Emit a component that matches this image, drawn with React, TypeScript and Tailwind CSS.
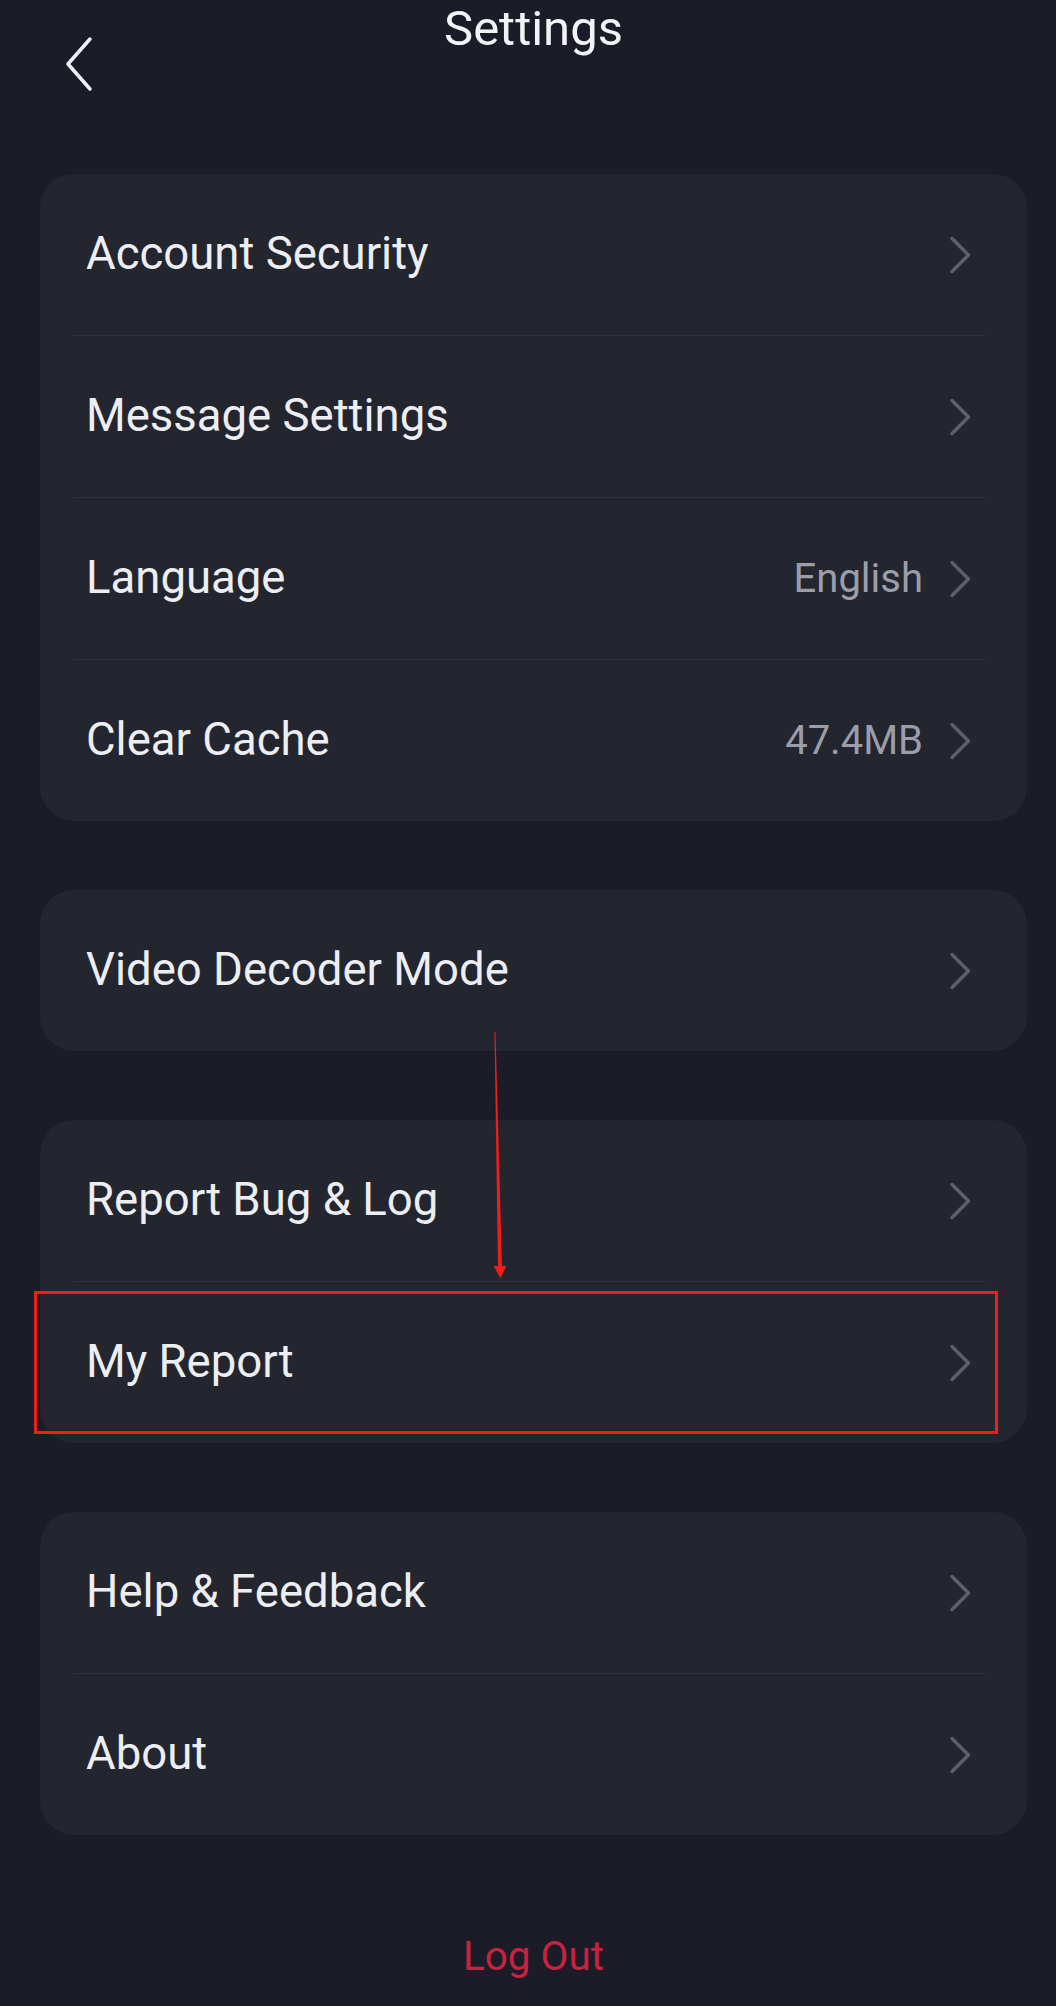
import React from 'react'

type Item = {
  label: string
  value?: string
  marked?: boolean
}

const groups: Item[][] = [
  [
    { label: 'Account Security' },
    { label: 'Message Settings' },
    { label: 'Language', value: 'English' },
    { label: 'Clear Cache', value: '47.4MB' },
  ],
  [{ label: 'Video Decoder Mode' }],
  [{ label: 'Report Bug & Log' }, { label: 'My Report', marked: true }],
  [{ label: 'Help & Feedback' }, { label: 'About' }],
]

function Chevron() {
  return (
    <svg width="22" height="38" viewBox="0 0 22 38" fill="none" className="shrink-0">
      <polyline points="3,2.5 19.5,19 3,35.5" stroke="#5d606c" strokeWidth={3.5} strokeLinecap="round" strokeLinejoin="round" />
    </svg>
  )
}

function Row({ item }: { item: Item }) {
  return (
    <div className="relative flex h-[161px] items-center pl-[46px] pr-[56px]">
      <span className="flex-1 text-[45.5px] text-[#eceef2]">{item.label}</span>
      {item.value && (
        <span className="mr-[26px] text-[40px] text-[#9b9ea8]">{item.value}</span>
      )}
      <Chevron />
      {/* annotation box */}
      {item.marked && (
        <div className="pointer-events-none absolute top-[9px] bottom-[9px] left-[-6px] right-[29px] border-[3px] border-[#f21d1a]" />
      )}
    </div>
  )
}

export default function App() {
  return (
    <div className="relative min-h-[2006px] w-[1056px] bg-[#1b1c27] pl-[40px] pr-[29px] font-['Roboto',sans-serif]">
      {/* Header */}
      <div className="grid h-[174px] grid-cols-[1fr_auto_1fr] items-start">
        <button className="ml-[22px] mt-[36px] w-[34px]" aria-label="Back">
          <svg width="34" height="56" viewBox="0 0 34 56" fill="none">
            <polyline points="28,3 6,28 28,53" stroke="#f2f3f6" strokeWidth={3.5} strokeLinecap="round" strokeLinejoin="round" />
          </svg>
        </button>
        <h1 className="pt-[1px] text-[49px] leading-[56px] font-normal text-[#f2f3f6]">Settings</h1>
        <div />
      </div>

      {/* Groups */}
      <div className="flex flex-col gap-[69px]">
        {groups.map((group, gi) => (
          <div key={gi} className="rounded-[34px] bg-[#23252f]">
            {group.map((item, i) => (
              <React.Fragment key={item.label}>
                {i > 0 && <div className="ml-[34px] mr-[41px] h-px bg-[#2e303b]" />}
                <Row item={item} />
              </React.Fragment>
            ))}
          </div>
        ))}
      </div>

      <div className="mt-[97px] text-center text-[40.5px] leading-[48px] text-[#c8223e]">Log Out</div>

      {/* annotation arrow */}
      <svg className="pointer-events-none absolute left-[480px] top-[1030px]" width="40" height="260" viewBox="0 0 40 260" fill="none">
        <polygon points="14.5,2 15.5,2 22,237 18,237" fill="#f21d1a" />
        <polygon points="13.5,236 26.5,236 20.5,248" fill="#f21d1a" />
      </svg>
    </div>
  )
}
